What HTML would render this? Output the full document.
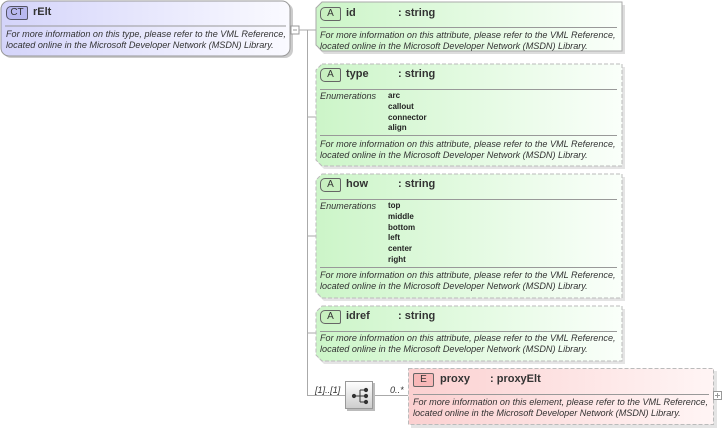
<!DOCTYPE html>
<html><head><meta charset="utf-8"><style>
body{margin:0;width:724px;height:428px;background:#fff;position:relative;overflow:hidden;font-family:"Liberation Sans",Arial,sans-serif}
.t{position:absolute;font-size:9.1px;font-style:italic;color:#333;line-height:10.5px;white-space:nowrap}
.h{position:absolute;font-size:11px;font-weight:bold;color:#333;white-space:nowrap}
.e{position:absolute;font-size:8px;font-weight:bold;color:#222;line-height:10.8px}
.badge{position:absolute;width:19px;height:12px;border:1px solid #666;border-radius:5px 2px 2px 5px;font-size:10px;text-align:center;line-height:12px;color:#333}
</style></head><body>
<svg width="724" height="428" style="position:absolute;left:0;top:0">
<defs>
<linearGradient id="g" x1="0" x2="1"><stop offset="0" stop-color="#ccf5c8"/><stop offset="1" stop-color="#fafffa"/></linearGradient>
<linearGradient id="p" x1="0" x2="1"><stop offset="0" stop-color="#d4d4fa"/><stop offset="1" stop-color="#fafaff"/></linearGradient>
<linearGradient id="r" x1="0" x2="1"><stop offset="0" stop-color="#fbd0d0"/><stop offset="1" stop-color="#fff5f5"/></linearGradient>
<linearGradient id="s" x1="0" y1="0" x2="0" y2="1"><stop offset="0" stop-color="#fff"/><stop offset="1" stop-color="#ccc"/></linearGradient>
</defs>
<rect x="3" y="3" width="290" height="55" rx="8" fill="#ccc"/>
<rect x="1" y="1" width="289" height="55" rx="8" fill="url(#p)" stroke="#999"/>
<line x1="5" y1="26" x2="286" y2="26" stroke="#999"/>
<rect x="291" y="26" width="8" height="8" fill="#fff" stroke="#999"/>
<line x1="293" y1="30" x2="297" y2="30" stroke="#999"/>
<g stroke="#aaa" fill="none">
<line x1="299" y1="30" x2="316" y2="30"/>
<line x1="307.5" y1="30" x2="307.5" y2="395"/>
<line x1="307" y1="117" x2="316" y2="117"/>
<line x1="307" y1="236" x2="316" y2="236"/>
<line x1="307" y1="333" x2="316" y2="333"/>
<line x1="307" y1="395.5" x2="408" y2="395.5"/>
</g>
<g stroke-width="1">
<polygon points="324,5 625,5 625,54 324,54 318,48 318,11" fill="#ddd"/>
<polygon points="322,2 622,2 622,51 322,51 316,45 316,8" fill="url(#g)" stroke="#aaa"/>
<polygon points="324,67 625,67 625,169 324,169 318,163 318,73" fill="#e4e4e4"/>
<polygon points="322,64 622,64 622,166 322,166 316,160 316,70" fill="url(#g)" stroke="#bbb" stroke-dasharray="4,2"/>
<polygon points="324,177 625,177 625,301 324,301 318,295 318,183" fill="#e4e4e4"/>
<polygon points="322,174 622,174 622,298 322,298 316,292 316,180" fill="url(#g)" stroke="#bbb" stroke-dasharray="4,2"/>
<polygon points="324,309 625,309 625,364 324,364 318,358 318,315" fill="#e4e4e4"/>
<polygon points="322,306 622,306 622,361 322,361 316,355 316,312" fill="url(#g)" stroke="#bbb" stroke-dasharray="4,2"/>
<rect x="411" y="371" width="306" height="57" fill="#e4e4e4"/>
<rect x="408.5" y="368.5" width="305" height="56" fill="url(#r)" stroke="#bbb" stroke-dasharray="4,2"/>
</g>
<g stroke="#999">
<line x1="320" y1="27.5" x2="617" y2="27.5"/>
<line x1="320" y1="89.5" x2="617" y2="89.5"/>
<line x1="320" y1="135.5" x2="617" y2="135.5"/>
<line x1="320" y1="199.5" x2="617" y2="199.5"/>
<line x1="320" y1="267.5" x2="617" y2="267.5"/>
<line x1="320" y1="331.5" x2="617" y2="331.5"/>
<line x1="413" y1="394.5" x2="709" y2="394.5"/>
</g>
<rect x="347" y="383" width="28" height="28" fill="#bbb"/>
<rect x="345.5" y="381.5" width="27" height="27" fill="url(#s)" stroke="#999"/>
<g stroke="#333" fill="#333">
<circle cx="354" cy="396" r="1.6"/>
<line x1="354" y1="396" x2="360" y2="396"/>
<line x1="360" y1="390" x2="360" y2="402"/>
<line x1="360" y1="390" x2="366" y2="390"/><line x1="360" y1="396" x2="366" y2="396"/><line x1="360" y1="402" x2="366" y2="402"/>
<circle cx="366" cy="390" r="1.6"/><circle cx="366" cy="396" r="1.6"/><circle cx="366" cy="402" r="1.6"/>
</g>
<rect x="713.5" y="391.5" width="8" height="8" fill="#fff" stroke="#999"/>
<g stroke="#999"><line x1="715" y1="395.5" x2="720" y2="395.5"/><line x1="717.5" y1="393" x2="717.5" y2="398"/></g>
</svg>

<div class="badge" style="left:6px;top:6px;width:20px;background:#b8b8f0;border-color:#556">CT</div>
<div class="h" style="left:33px;top:6px">rElt</div>
<div class="t" style="left:6px;top:29px">For more information on this type, please refer to the VML Reference,<br>located online in the Microsoft Developer Network (MSDN) Library.</div>

<div class="badge" style="left:320px;top:7px;background:#c8f0c0">A</div>
<div class="h" style="left:346px;top:7px">id</div><div class="h" style="left:398px;top:7px">: string</div>
<div class="t" style="left:320px;top:30px">For more information on this attribute, please refer to the VML Reference,<br>located online in the Microsoft Developer Network (MSDN) Library.</div>

<div class="badge" style="left:320px;top:68px;background:#c8f0c0">A</div>
<div class="h" style="left:346px;top:68px">type</div><div class="h" style="left:398px;top:68px">: string</div>
<div class="t" style="left:320px;top:91px">Enumerations</div>
<div class="e" style="left:388px;top:91px">arc<br>callout<br>connector<br>align</div>
<div class="t" style="left:320px;top:139px">For more information on this attribute, please refer to the VML Reference,<br>located online in the Microsoft Developer Network (MSDN) Library.</div>

<div class="badge" style="left:320px;top:178px;background:#c8f0c0">A</div>
<div class="h" style="left:346px;top:178px">how</div><div class="h" style="left:398px;top:178px">: string</div>
<div class="t" style="left:320px;top:201px">Enumerations</div>
<div class="e" style="left:388px;top:201px">top<br>middle<br>bottom<br>left<br>center<br>right</div>
<div class="t" style="left:320px;top:270px">For more information on this attribute, please refer to the VML Reference,<br>located online in the Microsoft Developer Network (MSDN) Library.</div>

<div class="badge" style="left:320px;top:310px;background:#c8f0c0">A</div>
<div class="h" style="left:346px;top:310px">idref</div><div class="h" style="left:398px;top:310px">: string</div>
<div class="t" style="left:320px;top:333px">For more information on this attribute, please refer to the VML Reference,<br>located online in the Microsoft Developer Network (MSDN) Library.</div>

<div class="badge" style="left:413px;top:373px;background:#f8b8b8;border-radius:2px">E</div>
<div class="h" style="left:440px;top:373px">proxy</div><div class="h" style="left:490px;top:373px">: proxyElt</div>
<div class="t" style="left:413px;top:397px">For more information on this element, please refer to the VML Reference,<br>located online in the Microsoft Developer Network (MSDN) Library.</div>

<div class="t" style="left:315px;top:385px">[1]..[1]</div>
<div class="t" style="left:390px;top:385px">0..*</div>
</body></html>
